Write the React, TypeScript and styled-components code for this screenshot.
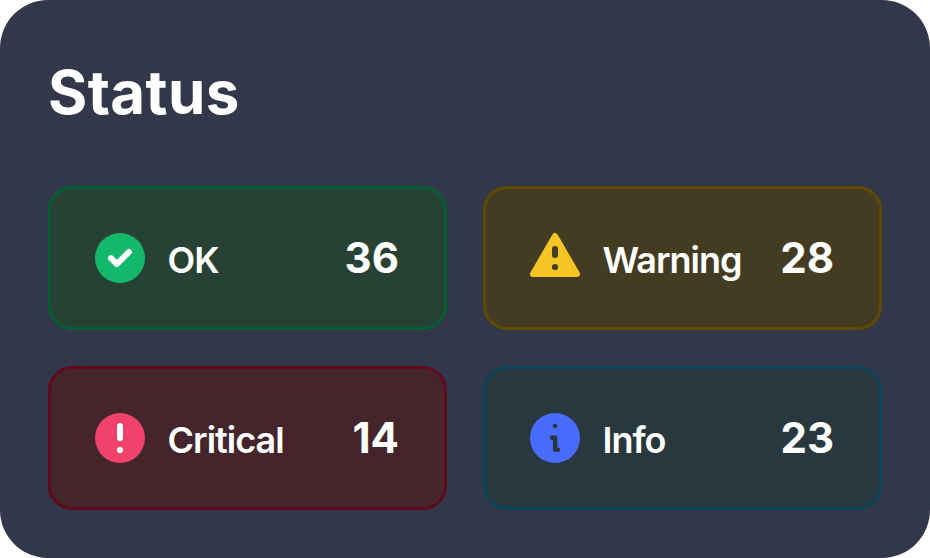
import React from "react";
import styled, { createGlobalStyle } from "styled-components";

const GlobalStyle = createGlobalStyle`
  *, *::before, *::after { box-sizing: border-box; }
  body { margin: 0; background: #fff; font-family: Inter, sans-serif; }
`;

const Panel = styled.main`
  width: 930px;
  height: 558px;
  padding: 47px 48px 48px;
  border-radius: 48px;
  background: #33374a;
  color: #fff;
`;

const Title = styled.h1`
  margin: 0 0 49px;
  height: 90px;
  font-size: 60px;
  line-height: 90px;
  font-weight: 700;
  letter-spacing: 0.4px;
`;

const Grid = styled.section`
  display: grid;
  grid-template-columns: 399px 399px;
  grid-auto-rows: 144px;
  gap: 36px;
`;

const Card = styled.article<{ $bg: string; $border: string }>`
  display: flex;
  align-items: center;
  gap: 20.5px;
  padding: 0 45px 0 42px;
  border: 3px solid ${(p) => p.$border};
  border-radius: 24px;
  background: ${(p) => p.$bg};
`;

const Icon = styled.svg`
  width: 54px;
  height: 54px;
  flex: none;
`;

const Label = styled.span`
  flex: 1;
  padding-top: 4px;
  font-size: 36px;
  line-height: 54px;
  font-weight: 600;
  letter-spacing: -1px;
`;

const Count = styled.strong`
  font-size: 42px;
  line-height: 54px;
  font-weight: 700;
`;

const OkIcon = () => (
  <Icon viewBox="0 0 54 54">
    <circle cx="27" cy="27" r="25" fill="#14b86a" />
    <path d="M18 27.2l6 5.8 12-12" fill="none" stroke="#fff" strokeWidth="6" strokeLinecap="round" strokeLinejoin="round" />
  </Icon>
);

const WarningIcon = () => (
  <Icon viewBox="0 0 54 54">
    <path d="M27 5L49 43H5Z" fill="#f5c525" stroke="#f5c525" strokeWidth="6" strokeLinejoin="round" />
    <path d="M27 18v6" stroke="#433c22" strokeWidth="6" strokeLinecap="round" />
    <circle cx="27" cy="36" r="3.1" fill="#433c22" />
  </Icon>
);

const CriticalIcon = () => (
  <Icon viewBox="0 0 54 54">
    <circle cx="27" cy="27" r="25" fill="#f0436c" />
    <path d="M27 15v12" stroke="#fff" strokeWidth="6" strokeLinecap="round" />
    <circle cx="27" cy="39" r="3.1" fill="#fff" />
  </Icon>
);

const InfoIcon = () => (
  <Icon viewBox="0 0 54 54">
    <circle cx="27" cy="27" r="25" fill="#4a6cfd" />
    <circle cx="27" cy="15" r="2.3" fill="#29383f" />
    <path d="M24 26.8h3.2v12h2.8" fill="none" stroke="#29383f" strokeWidth="4.4" strokeLinecap="round" strokeLinejoin="round" />
  </Icon>
);

const statuses = [
  { label: "OK", count: 36, bg: "#274235", border: "#075c32", Glyph: OkIcon },
  { label: "Warning", count: 28, bg: "#433c22", border: "#5f4a04", Glyph: WarningIcon },
  { label: "Critical", count: 14, bg: "#43252b", border: "#600a1e", Glyph: CriticalIcon },
  { label: "Info", count: 23, bg: "#29383f", border: "#0b4557", Glyph: InfoIcon },
];

export default function App() {
  return (
    <>
      <GlobalStyle />
      <Panel>
        <Title>Status</Title>
        <Grid>
          {statuses.map(({ label, count, bg, border, Glyph }) => (
            <Card key={label} $bg={bg} $border={border}>
              <Glyph />
              <Label>{label}</Label>
              <Count>{count}</Count>
            </Card>
          ))}
        </Grid>
      </Panel>
    </>
  );
}
